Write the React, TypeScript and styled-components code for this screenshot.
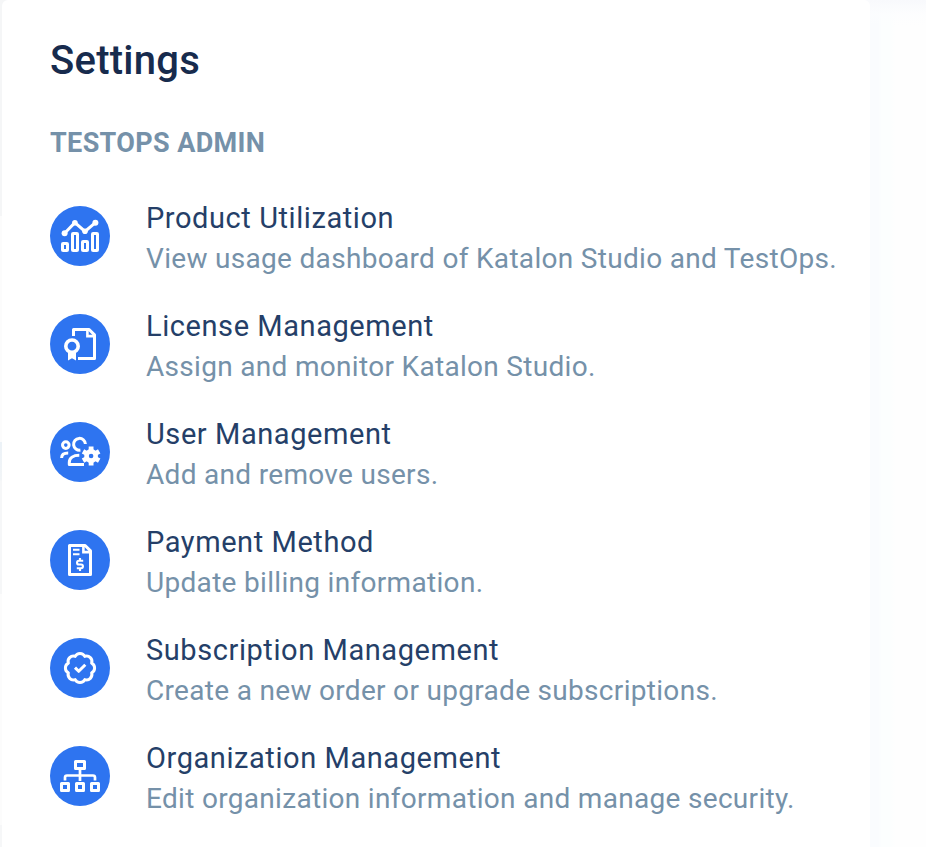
import React from "react";
import styled, { createGlobalStyle } from "styled-components";

const GlobalStyle = createGlobalStyle`
  * { box-sizing: border-box; }
  html, body { margin: 0; padding: 0; overflow: hidden; }
  body { font-family: Roboto, "Liberation Sans", sans-serif; background: #fff; }
`;

const Page = styled.div`
  display: grid;
  grid-template-columns: 2px 868px 1fr;
  width: 926px;
  height: 847px;
  overflow: hidden;
  background: linear-gradient(90deg, #f5f6f7 0 435px, #fafbfd 435px);
`;

const EdgeStrip = styled.div`
  background: linear-gradient(
    #f5f6f7 0 216px, #fcfcfc 216px 442px, #ecf2f7 442px, #f2f5f7 480px, #f6f7f8 481px 594px,
    #fcfcfc 594px 825px, #f6f7f8 825px
  );
`;

const Backdrop = styled.div`
  background:
    linear-gradient(#f8f9fc, rgba(252, 253, 254, 0.6) 14px, rgba(255, 255, 255, 0) 26px),
    linear-gradient(90deg, #fafcfe 0 8px, #fcfefe 12px 20px, #fefefe 26px);
`;

const Panel = styled.main`
  padding: 37px 32px 0 48px;
  background: #fff;
  border-radius: 6px 6px 0 0;
`;

const Title = styled.h1`
  margin: 0;
  font-size: 40px;
  line-height: 48px;
  letter-spacing: 0.25px;
  font-weight: 500;
  color: #172b4d;
`;

const SectionLabel = styled.h2`
  margin: 42px 0 0;
  font-size: 27px;
  line-height: 32px;
  letter-spacing: 0.36px;
  font-weight: 700;
  color: #7591a9;
`;

const List = styled.ul`
  display: grid;
  grid-auto-rows: 108px;
  margin: 39px 0 0;
  padding: 0;
  list-style: none;
`;

const Item = styled.li`
  display: flex;
  align-items: flex-start;
  gap: 36px;
`;

const IconDisc = styled.span`
  display: flex;
  flex: none;
  width: 60px;
  height: 60px;
  margin-top: 8px;
  border-radius: 50%;
  background: #2e74f0;
`;

const Glyph = styled.svg`
  width: 60px;
  height: 60px;
  fill: none;
  stroke: #fff;
  stroke-width: 3;
`;

const ItemText = styled.div`
  display: flex;
  flex-direction: column;
  white-space: nowrap;
`;

const ItemTitle = styled.span`
  font-size: 29px;
  line-height: 40px;
  letter-spacing: 0.57px;
  color: #253f68;
`;

const ItemDescription = styled.span`
  margin-top: 1px;
  font-size: 28px;
  line-height: 40px;
  letter-spacing: 0.31px;
  color: #7591a9;
`;

const UsageIcon = () => (
  <Glyph viewBox="0 0 60 60">
    <path d="M14.6 27.2 24.9 16.6 35 25.4 45.4 16.6" />
    <g fill="#fff" stroke="none">
      <circle cx="14.6" cy="27.2" r="3" />
      <circle cx="24.9" cy="16.8" r="2.8" />
      <circle cx="35" cy="25.2" r="2.8" />
      <circle cx="45.4" cy="16.8" r="3" />
    </g>
    <g>
      <rect x="12.5" y="37.5" width="5" height="7" rx="0.6" />
      <rect x="22.5" y="27.4" width="5" height="17.1" rx="0.6" />
      <rect x="32.5" y="35.4" width="5" height="9.1" rx="0.6" />
      <rect x="42.5" y="27.4" width="5" height="17.1" rx="0.6" />
    </g>
  </Glyph>
);

const LicenseIcon = () => (
  <Glyph viewBox="0 0 60 60">
    <path d="M23.5 22v-6.5h15.6l5.4 5.4v23.6H28" strokeLinejoin="round" />
    <path d="M37.4 16v6.1H44" strokeWidth="2.6" />
    <circle cx="22" cy="32.2" r="6.2" strokeWidth="3.6" />
    <path d="M18 37v9.4l4-2.2 4 2.2V37l-4 2z" fill="#fff" stroke="none" />
  </Glyph>
);

const UsersIcon = () => (
  <Glyph viewBox="0 0 60 60">
    <circle cx="15.8" cy="23.1" r="3.3" />
    <path d="M11.6 36c0-3.4 2.2-4.9 6.6-4.9" />
    <path d="M35.4 22a5.9 5.9 0 1 0-5 6.1" />
    <path d="M34 42.5H19.3v-2.2c0-4.4 3.8-7.1 10-7.1" strokeLinejoin="round" />
    <circle cx="41.1" cy="34" r="4.6" strokeWidth="4.6" />
    <path
      d="M41.1 29v-4.4M41.1 39v4.4M36.8 31.5l-3.8-2.2M45.4 36.5l3.8 2.2M36.8 36.5l-3.8 2.2M45.4 31.5l3.8-2.2"
      strokeWidth="4.8"
    />
  </Glyph>
);

const InvoiceIcon = () => (
  <Glyph viewBox="0 0 60 60">
    <path d="M19.5 15.5h15.6l5.4 5.4v23.6h-21z" strokeLinejoin="round" />
    <path d="M33.4 16v6.1H40" strokeWidth="2.6" />
    <path d="M23 19.7h6.5M23 24.2h6.5" strokeWidth="2" />
    <path
      d="M33.2 30.8h-4.3a1.8 1.8 0 0 0 0 3.7h2.2a1.8 1.8 0 0 1 0 3.7h-4.3M30 28v2.8M30 38.2V41"
      strokeWidth="2.1"
    />
  </Glyph>
);

const BadgeIcon = () => (
  <Glyph viewBox="0 0 60 60" strokeLinejoin="round">
    <path d="M25.18 18.36A5.4 5.4 0 0 1 34.82 18.36 5.4 5.4 0 0 1 41.64 25.18 5.4 5.4 0 0 1 41.64 34.82 5.4 5.4 0 0 1 34.82 41.64 5.4 5.4 0 0 1 25.18 41.64 5.4 5.4 0 0 1 18.36 34.82 5.4 5.4 0 0 1 18.36 25.18 5.4 5.4 0 0 1 25.18 18.36z" />
    <path d="M25 29.6l3.7 3.7 6.6-6.6" />
  </Glyph>
);

const OrgIcon = () => (
  <Glyph viewBox="0 0 60 60" strokeLinejoin="round">
    <path d="M25.5 15.5h9v7h-9zM11.5 37.5h7v7h-7zM26.5 37.5h7v7h-7zM41.5 37.5h7v7h-7z" />
    <path d="M30 23v12M15 34.5v-3a2 2 0 0 1 2-2h26a2 2 0 0 1 2 2v3" strokeWidth="2.7" />
  </Glyph>
);

const items = [
  { title: "Product Utilization", text: "View usage dashboard of Katalon Studio and TestOps.", Icon: UsageIcon },
  { title: "License Management", text: "Assign and monitor Katalon Studio.", Icon: LicenseIcon },
  { title: "User Management", text: "Add and remove users.", Icon: UsersIcon },
  { title: "Payment Method", text: "Update billing information.", Icon: InvoiceIcon },
  { title: "Subscription Management", text: "Create a new order or upgrade subscriptions.", Icon: BadgeIcon },
  { title: "Organization Management", text: "Edit organization information and manage security.", Icon: OrgIcon },
];

export default function App() {
  return (
    <>
      <GlobalStyle />
      <Page>
        <EdgeStrip />
        <Panel>
          <Title>Settings</Title>
          <SectionLabel>TESTOPS ADMIN</SectionLabel>
          <List>
            {items.map(({ title, text, Icon }) => (
              <Item key={title}>
                <IconDisc>
                  <Icon />
                </IconDisc>
                <ItemText>
                  <ItemTitle>{title}</ItemTitle>
                  <ItemDescription>{text}</ItemDescription>
                </ItemText>
              </Item>
            ))}
          </List>
        </Panel>
        <Backdrop />
      </Page>
    </>
  );
}
